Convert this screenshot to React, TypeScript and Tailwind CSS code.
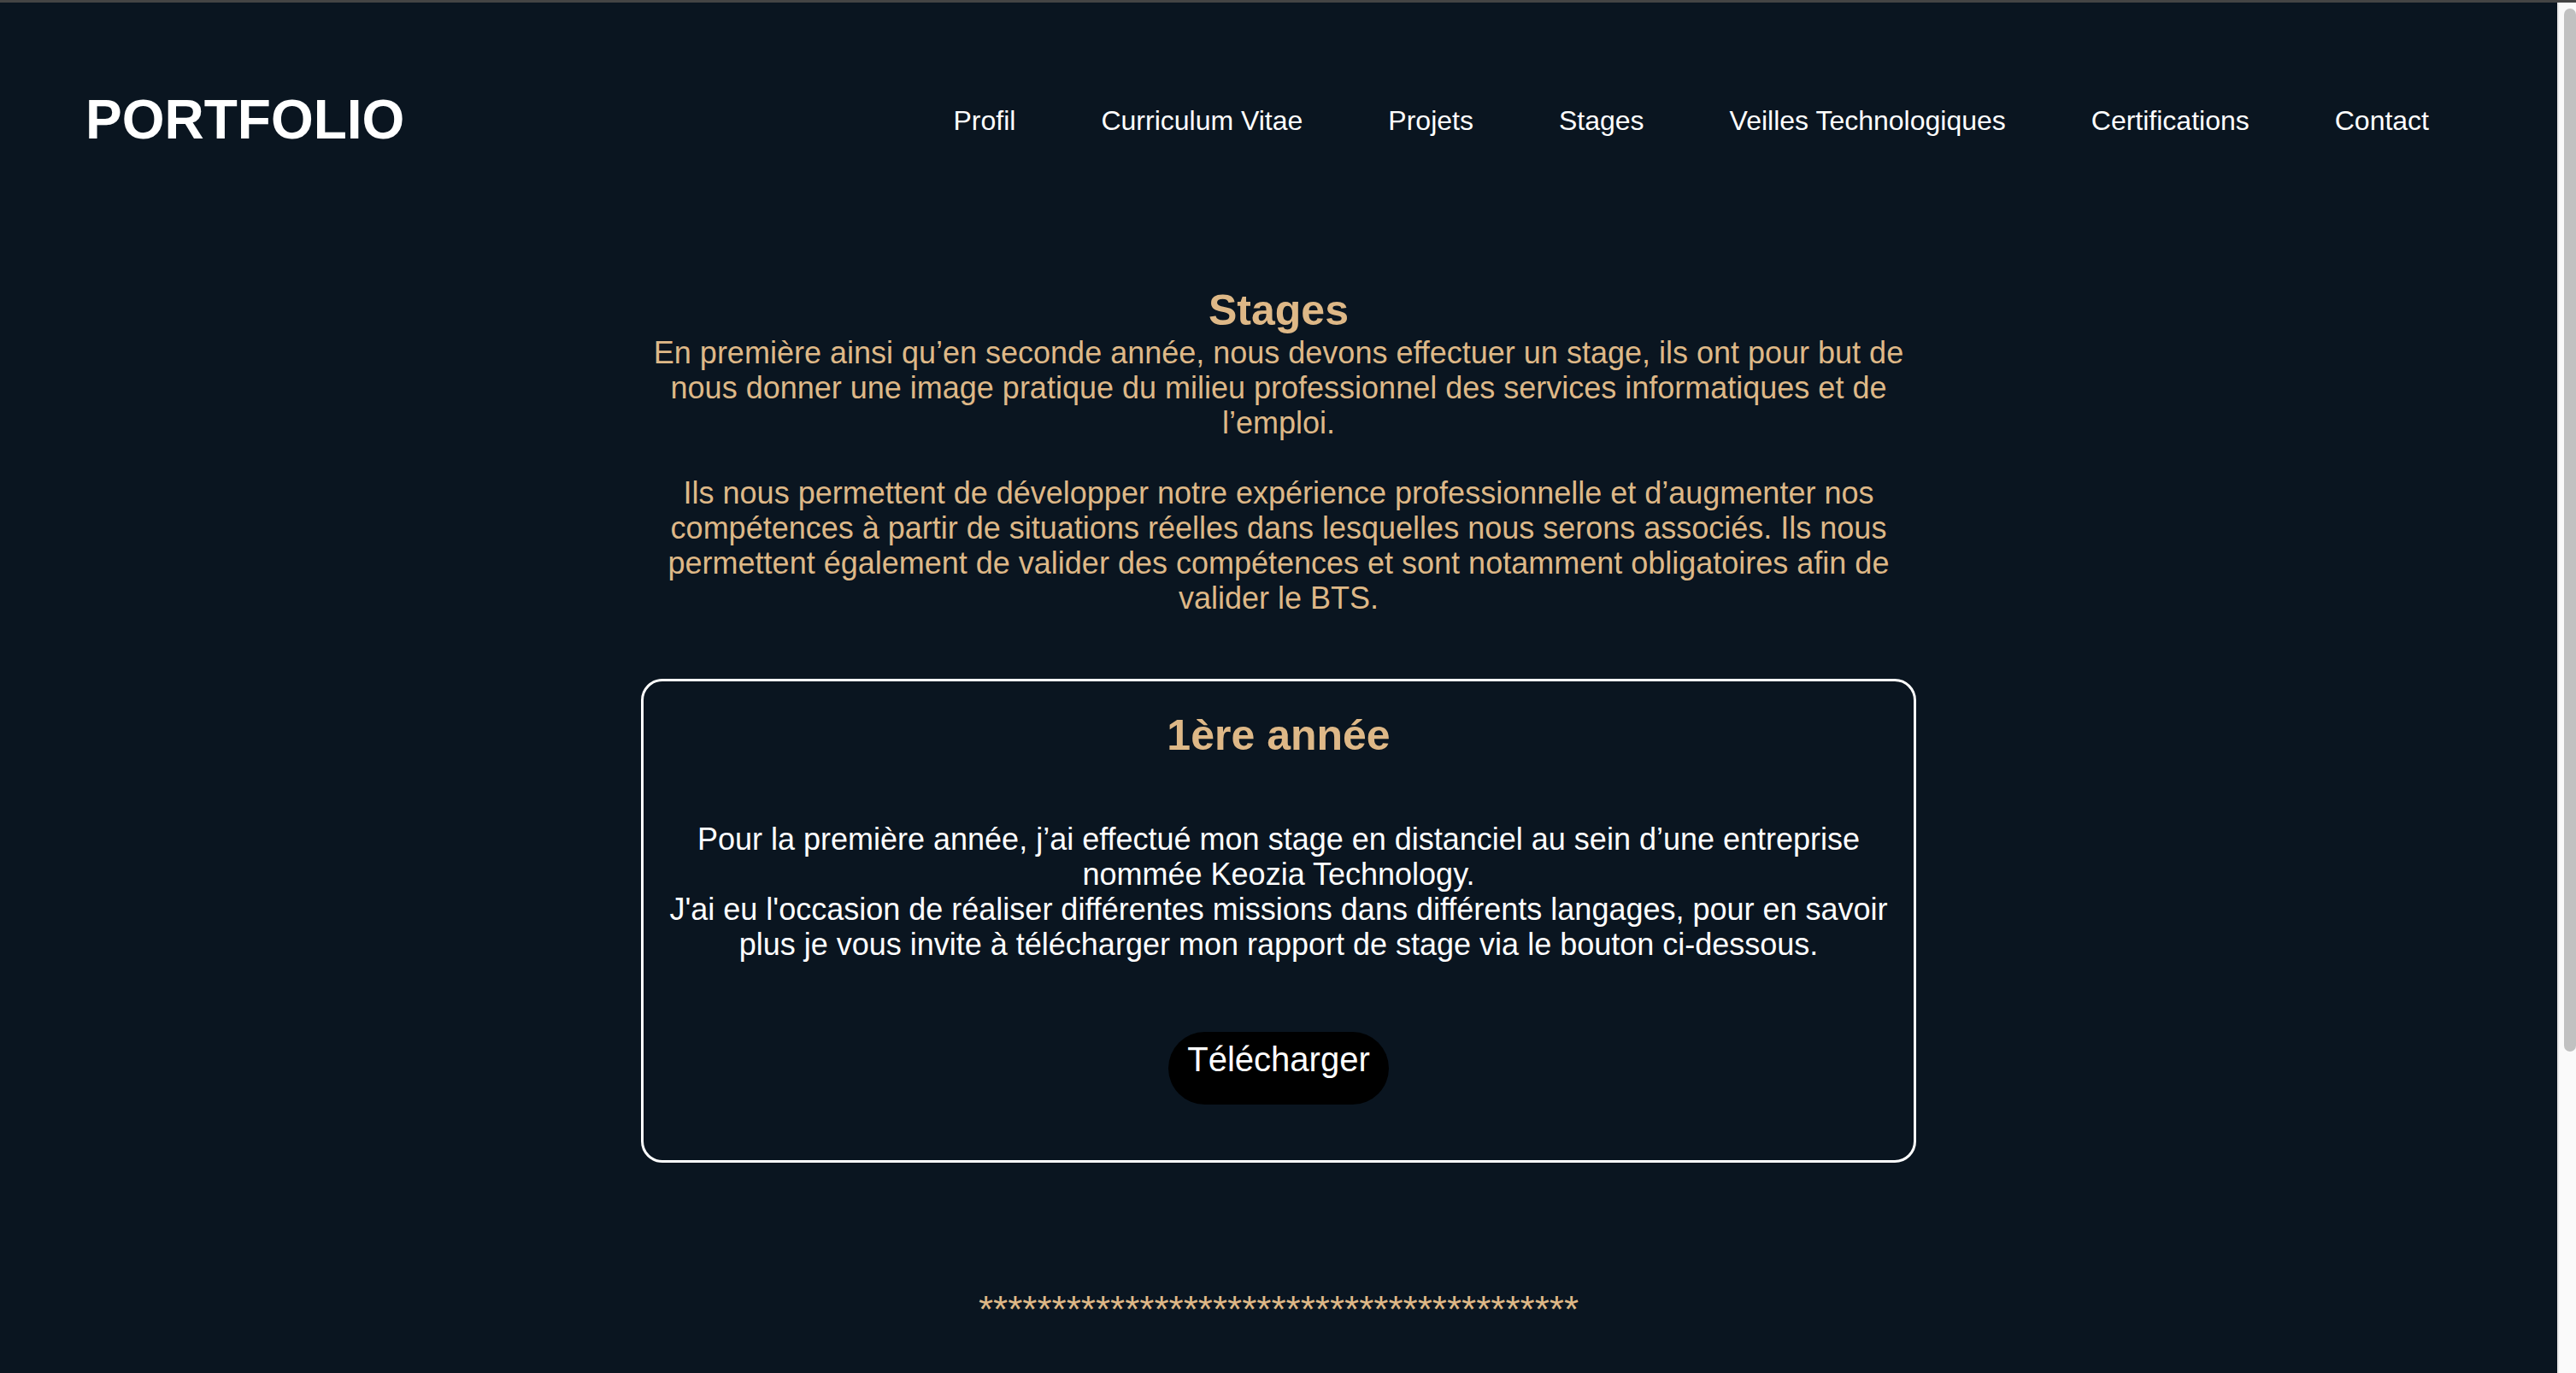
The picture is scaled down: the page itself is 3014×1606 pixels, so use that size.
const NAV_LINKS = [
  'Profil',
  'Curriculum Vitae',
  'Projets',
  'Stages',
  'Veilles Technologiques',
  'Certifications',
  'Contact',
];

function Header() {
  return (
    <header className="flex h-[274px] items-center px-[100px]">
      <h1 className="text-[64px] font-bold text-white">PORTFOLIO</h1>
      <nav className="ml-auto flex pt-[3px]">
        {NAV_LINKS.map(link => (
          <a key={link} href="#" className="mx-[50px] text-[32px] text-white">
            {link}
          </a>
        ))}
      </nav>
    </header>
  );
}

function StageCard() {
  return (
    <div className="mx-auto mt-[74px] flex w-[1492px] flex-col items-center rounded-[25px] border-[3px] border-white px-[20px] pt-[34px] pb-[65px] text-center">
      <h3 className="text-[50px] font-bold text-[#deb887]">1ère année</h3>
      <p className="mt-[72px] text-[36px] leading-[41px] text-white">
        Pour la première année, j’ai effectué mon stage en distanciel au sein d’une entreprise nommée Keozia
        Technology.
        <br />
        J'ai eu l'occasion de réaliser différentes missions dans différents langages, pour en savoir plus je vous
        invite à télécharger mon rapport de stage via le bouton ci-dessous.
      </p>
      <button className="mt-[82px] rounded-[43px] bg-black px-[22px] pt-[10px] pb-[30px] text-[40px] text-white">
        Télécharger
      </button>
    </div>
  );
}

function Scrollbar() {
  return (
    <div className="w-[22px] shrink-0 border-l-2 border-[#e8e8e8] bg-[#fafafa] pt-[7px]">
      <div className="ml-[6px] h-[1220px] w-[14px] rounded-full bg-[#c1c1c1]" />
    </div>
  );
}

export default function App() {
  return (
    <div className="flex h-[1606px] w-full flex-col overflow-hidden bg-[#0a1520] font-['Liberation_Sans',Arial,sans-serif] leading-[normal]">
      <div className="h-[3px] shrink-0 bg-[#444444]" />
      <div className="flex min-h-0 flex-1">
        <main className="min-w-0 flex-1">
          <Header />
          <section className="mx-auto w-[1496px] pt-[57px] text-center">
            <h2 className="text-[50px] font-bold text-[#deb887]">Stages</h2>
            <p className="text-[36px] leading-[41px] text-[#deb887]">
              En première ainsi qu’en seconde année, nous devons effectuer un stage, ils ont pour but de nous donner
              une image pratique du milieu professionnel des services informatiques et de l’emploi.
              <br />
              <br />
              Ils nous permettent de développer notre expérience professionnelle et d’augmenter nos compétences à
              partir de situations réelles dans lesquelles nous serons associés. Ils nous permettent également de
              valider des compétences et sont notamment obligatoires afin de valider le BTS.
            </p>
          </section>
          <StageCard />
          <p className="mt-[147px] text-center text-[44px] text-[#deb887]">
            *****************************************
          </p>
        </main>
        <Scrollbar />
      </div>
    </div>
  );
}
